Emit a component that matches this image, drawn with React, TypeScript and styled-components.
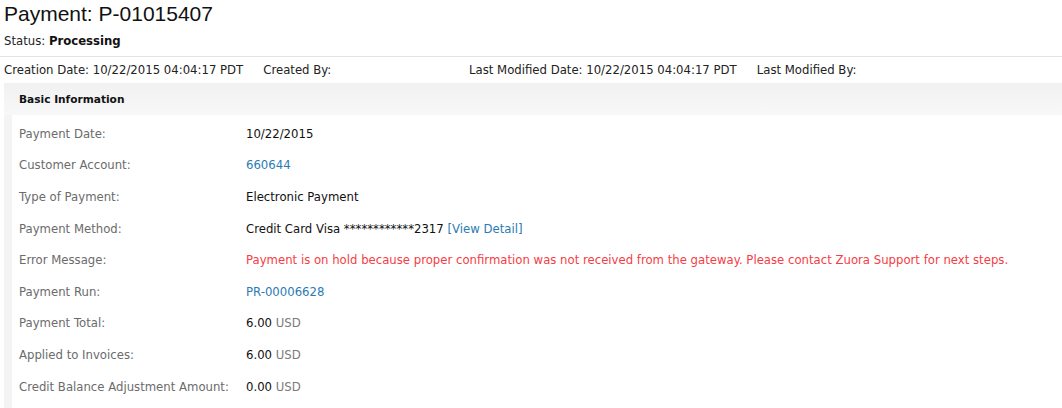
import styled, { createGlobalStyle } from "styled-components";

const GlobalStyle = createGlobalStyle`
  html, body {
    margin: 0;
    padding: 0;
    background: #fff;
    overflow: hidden;
  }
  body {
    font-family: "DejaVu Sans", Verdana, sans-serif;
    font-size: 11.7px;
    color: #222;
  }
`;

const Page = styled.div`
  width: 1062px;
  height: 408px;
  overflow: hidden;
`;

const Heading = styled.div`
  padding: 0 4px;
`;

const Title = styled.h1`
  margin: 0;
  padding-top: 1px;
  font-family: "Liberation Sans", Arial, sans-serif;
  font-weight: normal;
  font-size: 21px;
  line-height: 26px;
  color: #111;
`;

const Status = styled.div`
  margin-top: 7px;
  line-height: 14px;
  color: #222;

  b {
    font-weight: bold;
    color: #111;
  }
`;

const Divider = styled.hr`
  margin: 8px 0 0;
  border: 0;
  border-top: 1px solid #e3e3e3;
`;

const AuditBar = styled.div`
  display: flex;
  padding: 0 4px;
  height: 25px;
  align-items: center;
  color: #222;
`;

const AuditGroup = styled.div<{ $width?: number; $gap: number }>`
  display: flex;
  gap: ${({ $gap }) => $gap}px;
  width: ${({ $width }) => ($width ? `${$width}px` : "auto")};
  flex-shrink: 0;
`;

const Panel = styled.section`
  margin: 1px 0 0 4px;
  background: #f4f4f4;
  border-top-left-radius: 4px;
  padding-left: 8px;
`;

const PanelHeader = styled.div`
  height: 32px;
  margin-left: -8px;
  padding-left: 15px;
  display: flex;
  align-items: center;
  font-weight: bold;
  font-size: 10.6px;
  color: #111;
  background: linear-gradient(#f1f1f1, #f8f8f8);
`;

const PanelBody = styled.div`
  background: #fff;
  padding: 3px 0 40px;
`;

const Row = styled.div`
  display: grid;
  grid-template-columns: 227px 1fr;
  height: 31.6px;
  align-items: center;
  padding-left: 7px;
`;

const Label = styled.span`
  color: #6b6b6b;
  white-space: nowrap;
`;

type Tone = "plain" | "link" | "error";

const Value = styled.span<{ $tone?: Tone }>`
  white-space: nowrap;
  color: ${({ $tone }) =>
    $tone === "link" ? "#2b7bb3" : $tone === "error" ? "#f53d45" : "#111"};
`;

const Link = styled.a`
  color: #2b7bb3;
  text-decoration: none;
`;

const Currency = styled.span`
  color: #7a7a7a;
`;

const rows: { label: string; value: React.ReactNode; tone?: Tone }[] = [
  { label: "Payment Date:", value: "10/22/2015" },
  { label: "Customer Account:", value: "660644", tone: "link" },
  { label: "Type of Payment:", value: "Electronic Payment" },
  {
    label: "Payment Method:",
    value: (
      <>
        Credit Card Visa ************2317 <Link href="#">[View Detail]</Link>
      </>
    ),
  },
  {
    label: "Error Message:",
    value:
      "Payment is on hold because proper confirmation was not received from the gateway. Please contact Zuora Support for next steps.",
    tone: "error",
  },
  { label: "Payment Run:", value: "PR-00006628", tone: "link" },
  {
    label: "Payment Total:",
    value: (
      <>
        6.00 <Currency>USD</Currency>
      </>
    ),
  },
  {
    label: "Applied to Invoices:",
    value: (
      <>
        6.00 <Currency>USD</Currency>
      </>
    ),
  },
  {
    label: "Credit Balance Adjustment Amount:",
    value: (
      <>
        0.00 <Currency>USD</Currency>
      </>
    ),
  },
];

const App = () => {
  return (
    <Page>
      <GlobalStyle />
      <Heading>
        <Title>Payment: P-01015407</Title>
        <Status>
          Status: <b>Processing</b>
        </Status>
      </Heading>
      <Divider />
      <AuditBar>
        <AuditGroup $width={465} $gap={20}>
          <span>Creation Date: 10/22/2015 04:04:17 PDT</span>
          <span>Created By:</span>
        </AuditGroup>
        <AuditGroup $gap={20}>
          <span>Last Modified Date: 10/22/2015 04:04:17 PDT</span>
          <span>Last Modified By:</span>
        </AuditGroup>
      </AuditBar>
      <Panel>
        <PanelHeader>Basic Information</PanelHeader>
        <PanelBody>
          {rows.map((row) => (
            <Row key={row.label}>
              <Label>{row.label}</Label>
              <Value $tone={row.tone}>{row.value}</Value>
            </Row>
          ))}
        </PanelBody>
      </Panel>
    </Page>
  );
};

export default App;
